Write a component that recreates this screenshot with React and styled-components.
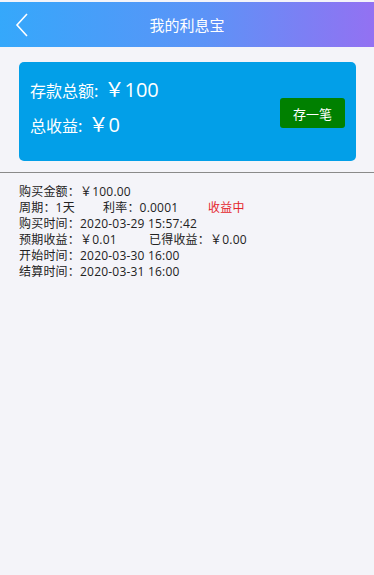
import React from "react"
import styled, { createGlobalStyle } from "styled-components"

const GlobalStyle = createGlobalStyle`
    html, body {
        margin: 0;
        padding: 0;
        background: #f4f4f9;
        font-family: "Open Sans", "Noto Sans CJK SC", sans-serif;
        color: #222;
    }
`

const Page = styled.div`
    min-height: 575px;
    background: #f4f4f9;
    padding-top: 2px;
`

const Header = styled.div`
    position: relative;
    display: flex;
    align-items: center;
    justify-content: center;
    height: 45px;
    background: linear-gradient(90deg, #35a8fb 0%, #5c93f7 55%, #9371f2 100%);
    color: #fff;
    font-family: "Noto Sans CJK SC", sans-serif;
    font-size: 15px;
`

const Back = styled.button`
    position: absolute;
    left: 14px;
    top: 10px;
    padding: 0;
    border: 0;
    background: none;
    display: flex;
`

const Card = styled.div`
    margin: 15px 18px 0 19px;
    height: 99px;
    border-radius: 5px;
    background: #029fe8;
    display: flex;
    align-items: center;
    justify-content: space-between;
    padding: 0 11px 0 11px;
    color: #fff;
`

const Totals = styled.div`
    display: flex;
    flex-direction: column;
    gap: 7px;
    padding-bottom: 8px;
`

const Total = styled.div`
    display: flex;
    align-items: baseline;
    font-family: "Noto Sans CJK SC", sans-serif;
    font-size: 16px;
    line-height: 28px;
`

const Amount = styled.span`
    font-size: 20px;
    margin-left: 6px;
    font-family: "Open Sans", "Noto Sans CJK SC", sans-serif;
`

const DepositButton = styled.button`
    margin-top: 3px;
    width: 65px;
    height: 30px;
    border: 0;
    border-radius: 3px;
    background: #008000;
    color: #fff;
    font-family: "Noto Sans CJK SC", sans-serif;
    font-size: 13px;
`

const Divider = styled.div`
    margin-top: 11px;
    height: 1px;
    background: #8a8a8a;
`

const Records = styled.div`
    padding: 11px 19px;
    font-size: 12px;
    line-height: 16px;
    letter-spacing: 0.2px;
`

const Line = styled.div`
    display: flex;
    white-space: pre;
`

const Cell = styled.span`
    width: ${(p) => p.w || "auto"};
    color: ${(p) => (p.red ? "#e4262d" : "inherit")};
`

const record = {
    amount: "￥100.00",
    period: "1天",
    rate: "0.0001",
    status: "收益中",
    bought: "2020-03-29 15:57:42",
    expected: "￥0.01",
    earned: "￥0.00",
    start: "2020-03-30 16:00",
    end: "2020-03-31 16:00",
}

export default function App() {
    return (
        <Page>
            <GlobalStyle />
            <Header>
                <Back aria-label="返回">
                    <svg width="16" height="26" viewBox="0 0 16 26" fill="none">
                        <path d="M13 2 L3 13 L13 24" stroke="#fff" strokeWidth="1.6" />
                    </svg>
                </Back>
                我的利息宝
            </Header>
            <Card>
                <Totals>
                    <Total>
                        存款总额:<Amount>￥100</Amount>
                    </Total>
                    <Total>
                        总收益:<Amount>￥0</Amount>
                    </Total>
                </Totals>
                <DepositButton>存一笔</DepositButton>
            </Card>
            <Divider />
            <Records>
                <Line>购买金额：{record.amount}</Line>
                <Line>
                    <Cell w="84px">周期：{record.period}</Cell>
                    <Cell w="105px">利率：{record.rate}</Cell>
                    <Cell red>{record.status}</Cell>
                </Line>
                <Line>购买时间：{record.bought}</Line>
                <Line>
                    <Cell w="130px">预期收益：{record.expected}</Cell>
                    <Cell>已得收益：{record.earned}</Cell>
                </Line>
                <Line>开始时间：{record.start}</Line>
                <Line>结算时间：{record.end}</Line>
            </Records>
        </Page>
    )
}
